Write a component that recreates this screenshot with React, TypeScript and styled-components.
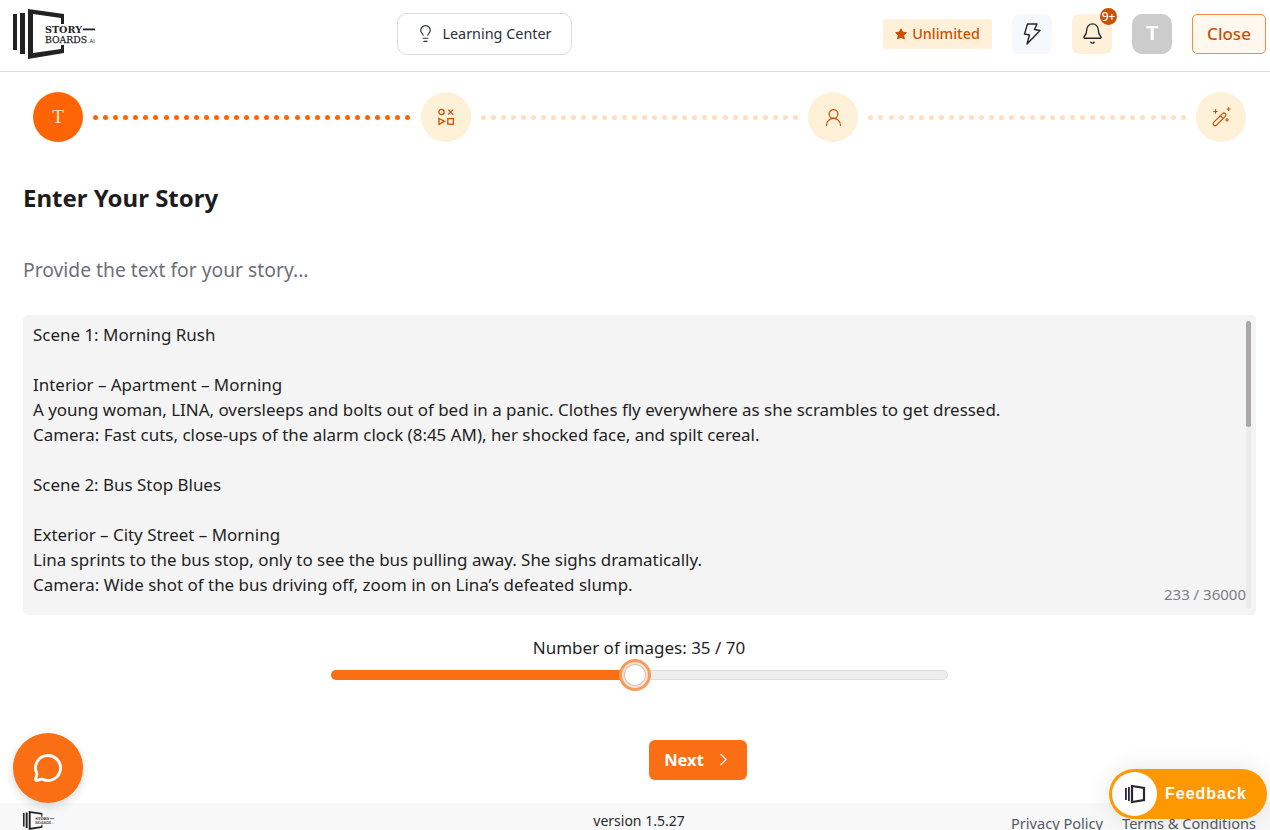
import React from "react";
import styled, { createGlobalStyle } from "styled-components";
import { Bell, ChevronRight, Lightbulb, MessageCircle, UserRound } from "lucide-react";

const FONT = `"Noto Sans", "Open Sans", sans-serif`;

const Global = createGlobalStyle`
  html, body { margin: 0; padding: 0; background: #fff; overflow: hidden; }
  body { font-family: ${FONT}; color: #1f1f1f; }
  * { box-sizing: border-box; }
`;

const Page = styled.div`
  position: relative;
  width: 1270px;
  height: 830px;
  overflow: hidden;
  display: flex;
  flex-direction: column;
`;

const Header = styled.header`
  flex: none;
  height: 72px;
  border-bottom: 1px solid #dcdcdc;
  display: flex;
  align-items: center;
  padding: 0 4px 0 13px;
`;

const LogoSlot = styled.div`
  flex: none;
  display: flex;
  margin-top: -3px;
`;

const LearningButton = styled.button`
  margin-left: 300px;
  margin-top: -3px;
  width: 175px;
  height: 42px;
  border: 1px solid #dcdcdc;
  border-radius: 10px;
  background: #fff;
  display: flex;
  align-items: center;
  justify-content: center;
  gap: 7px;
  font: 400 14.4px ${FONT};
  color: #29303b;
  padding: 0 1px 2px 0;
`;

const RightGroup = styled.div`
  margin-left: auto;
  display: flex;
  align-items: center;
  gap: 20px;
  margin-top: -4px;
`;

const PlanBadge = styled.div`
  width: 109px;
  height: 30px;
  background: #fff1d9;
  border-radius: 3px;
  display: flex;
  align-items: center;
  justify-content: center;
  gap: 5px;
  color: #cc4f00;
  font: 500 14.4px ${FONT};
`;

const IconTile = styled.div<{ $bg: string }>`
  position: relative;
  width: 40px;
  height: 40px;
  border-radius: 7px;
  background: ${(p) => p.$bg};
  display: flex;
  align-items: center;
  justify-content: center;
  color: #25252b;
`;

const CountBadge = styled.span`
  position: absolute;
  left: 28px;
  top: -6px;
  width: 17px;
  height: 17px;
  border-radius: 50%;
  background: #cc4f00;
  color: #fff;
  font: 500 12px/17px ${FONT};
  text-align: center;
`;

const Avatar = styled(IconTile)`
  border-radius: 10px;
  color: #fff;
  font: 700 20px "Liberation Sans", sans-serif;
`;

const CloseButton = styled.button`
  width: 74px;
  height: 40px;
  border: 1px solid #f58a45;
  border-radius: 5px;
  background: #fff8ef;
  color: #cc4f00;
  font: 500 17px ${FONT};
  padding: 0;
`;

const Stepper = styled.nav`
  flex: none;
  height: 50px;
  margin: 20px 24px 0 33px;
  display: flex;
  align-items: center;
`;

const StepCircle = styled.div<{ $active?: boolean }>`
  flex: none;
  width: 50px;
  height: 50px;
  border-radius: 50%;
  background: ${(p) => (p.$active ? "#ff6404" : "#fff0d8")};
  color: ${(p) => (p.$active ? "#ffe3cf" : "#cc4f00")};
  display: flex;
  align-items: center;
  justify-content: center;
  font: 400 19px "Liberation Serif", serif;
`;

const Connector = styled.div`
  flex: 1;
  margin: 0 10px;
  display: flex;
  justify-content: space-between;
`;

const Dot = styled.span<{ $active?: boolean }>`
  width: 5px;
  height: 5px;
  border-radius: 50%;
  background: ${(p) => (p.$active ? "#ff6404" : "#ffe0bd")};
`;

const Main = styled.main`
  flex: none;
  height: 661px;
  padding: 0 14px 0 23px;
  display: flex;
  flex-direction: column;
`;

const Title = styled.h1`
  margin: 38px 0 0;
  font: 700 24px/36px ${FONT};
  color: #1d1d1f;
`;

const Subtitle = styled.p`
  margin: 40px 0 0;
  font: 400 19.3px/28px ${FONT};
  color: #6d7078;
`;

const StoryBox = styled.div`
  position: relative;
  margin-top: 31px;
  height: 300px;
  border-radius: 5px;
  background: #f4f4f4;
  padding: 7px 10px;
  overflow: hidden;
  font: 400 16.95px/25px ${FONT};
  color: #1f1f1f;
  white-space: pre-wrap;
`;

const ScrollTrack = styled.div`
  position: absolute;
  right: 5px;
  top: 6px;
  bottom: 6px;
  width: 5px;
  border-radius: 3px;
  background: #ececec;
`;

const ScrollThumb = styled.div`
  height: 106px;
  border-radius: 3px;
  background: #aaa7a7;
`;

const Counter = styled.span`
  position: absolute;
  right: 10px;
  bottom: 11px;
  font: 400 15px/20px ${FONT};
  color: #7b7f87;
`;

const SliderBlock = styled.div`
  align-self: center;
  margin: 21px 0 0 -1px;
  width: 617px;
  display: flex;
  flex-direction: column;
  align-items: center;
`;

const SliderLabel = styled.div`
  font: 400 17px/24px ${FONT};
  color: #1f1f1f;
`;

const Track = styled.div`
  position: relative;
  margin-top: 10px;
  width: 100%;
  height: 10px;
  border-radius: 5px;
  background: #eeeeee;
  box-shadow: inset 0 0 0 1px #dedede;
`;

const TrackFill = styled.div`
  height: 100%;
  border-radius: 5px 0 0 5px;
  background: #fa6e14;
`;

const Thumb = styled.div`
  position: absolute;
  top: 50%;
  width: 32px;
  height: 32px;
  margin: -16px 0 0 -16px;
  border-radius: 50%;
  background: #fff;
  border: 3px solid #f79b5c;
  box-shadow: inset 0 0 0 2px #fbe3cf, inset 0 0 0 3px #cfc8c0;
`;

const NextButton = styled.button`
  align-self: flex-start;
  margin: 60px 0 0 626px;
  width: 98px;
  height: 40px;
  border: none;
  border-radius: 6px;
  background: #fa6e14;
  color: #fff;
  font: 700 16.5px ${FONT};
  display: flex;
  align-items: center;
  justify-content: center;
  gap: 9px;
  padding: 0 0 1px 2px;
`;

const Footer = styled.footer`
  flex: none;
  height: 40px;
  background: #f8f8f8;
  padding: 8px 14px 0 23px;
  display: grid;
  grid-template-columns: 1fr auto 1fr;
  align-items: start;
  font: 400 14px/20px ${FONT};
  color: #3d4148;
`;

const FooterVersion = styled.span`
  margin-right: 1px;
  color: #2a2a2a;
`;

const FooterLinks = styled.div`
  display: flex;
  justify-content: flex-end;
  gap: 19px;
  margin-top: 2px;
  font-size: 14.6px;
  color: #555a63;
`;

const ChatBubble = styled.button`
  position: absolute;
  left: 13px;
  top: 733px;
  width: 70px;
  height: 70px;
  border: none;
  border-radius: 50%;
  background: #fa6e14;
  box-shadow: 0 3px 10px rgba(0, 0, 0, 0.16);
  color: #fff;
  display: flex;
  align-items: center;
  justify-content: center;
  padding: 0;
`;

const FeedbackPill = styled.button`
  position: absolute;
  left: 1109px;
  top: 769px;
  width: 158px;
  height: 50px;
  border: none;
  border-radius: 25px;
  background: #ff9800;
  box-shadow: 0 0 24px rgba(0, 0, 0, 0.1);
  color: #fff;
  font: 700 16px "Liberation Sans", sans-serif;
  letter-spacing: 1px;
  display: flex;
  align-items: center;
  gap: 8px;
  padding: 0 0 0 3px;
`;

const FeedbackIcon = styled.span`
  width: 45px;
  height: 44px;
  border-radius: 50%;
  background: #fff;
  display: flex;
  align-items: center;
  justify-content: center;
`;

const Logo = ({ w = 84, h = 50 }: { w?: number; h?: number }) => (
  <svg width={w} height={h} viewBox="0 0 84 50" style={{ flex: "none" }}>
    <rect x="0" y="5" width="4" height="36" fill="#222" />
    <rect x="7" y="4" width="5" height="41" fill="#222" />
    <path d="M15 0 L51 5 V15 H48 V9 L20 5 V44 L48 40 V36 H51 V44 L15 50 Z" fill="#222" />
    <text x="32" y="24" fontFamily="'DejaVu Serif', serif" fontSize="10" fontWeight="700" fill="#222" textLength="37" lengthAdjust="spacingAndGlyphs">STORY</text>
    <rect x="70" y="19.5" width="12" height="1.8" fill="#222" />
    <text x="32" y="34" fontFamily="'DejaVu Serif', serif" fontSize="10" fill="#222" stroke="#222" strokeWidth="0.25" textLength="42" lengthAdjust="spacingAndGlyphs">BOARDS</text>
    <text x="75" y="34" fontFamily="'Liberation Sans', sans-serif" fontSize="5.5" fill="#222">.AI</text>
  </svg>
);

const SmallFeedbackMark = () => (
  <svg width="22" height="20" viewBox="0 0 22 20" fill="none">
    <rect x="1" y="4" width="1.8" height="12" fill="#2a2533" />
    <rect x="4" y="3" width="1.8" height="14" fill="#2a2533" />
    <path d="M8 2 L20 4 V16 L8 18 Z" stroke="#2a2533" strokeWidth="2.2" fill="none" />
  </svg>
);

const ShapesIcon = () => (
  <svg width="18" height="18" viewBox="0 0 18 18" fill="none" stroke="currentColor" strokeWidth="1.3">
    <circle cx="4.5" cy="4" r="2.6" />
    <path d="M11 1.6 L16.2 6.6 M16.2 1.6 L11 6.6" />
    <path d="M2 10.5 L7.5 13.3 L2 16.3 Z" />
    <rect x="10.8" y="10.6" width="5.6" height="5.6" />
  </svg>
);

const WandIcon = () => (
  <svg width="24" height="24" viewBox="0 0 22 22" fill="none" stroke="currentColor" strokeWidth="1.1">
    <rect x="-1.6" y="-7.5" width="3.6" height="15" rx="1.8" transform="translate(9.5 13) rotate(45)" />
    <path d="M10 9.5 L12.6 12" />
    <path d="M6 4 V8 M4 6 H8 M18 2 V5.4 M16.3 3.7 H19.7 M16.5 12 V15.4 M14.8 13.7 H18.2" strokeWidth="1" />
  </svg>
);

const BoltIcon = () => (
  <svg width="20" height="24" viewBox="0 0 20 24" fill="none" stroke="#25252b" strokeWidth="1.4" strokeLinejoin="round">
    <path d="M5.5 2 H15 L12.5 7.5 L18 8.5 L5 22 L7.5 13 L2.5 12 Z" />
  </svg>
);

const StarIcon = () => (
  <svg width="12" height="12" viewBox="0 0 24 24" fill="currentColor">
    <path d="M12 1.5 L15.3 8.2 L22.8 9.3 L17.4 14.5 L18.7 22 L12 18.5 L5.3 22 L6.6 14.5 L1.2 9.3 L8.7 8.2 Z" strokeLinejoin="round" stroke="currentColor" strokeWidth="2" />
  </svg>
);

const dots = Array.from({ length: 32 });

const Dots = ({ active }: { active?: boolean }) => (
  <Connector>
    {dots.map((_, i) => (
      <Dot key={i} $active={active} />
    ))}
  </Connector>
);

const story = `Scene 1: Morning Rush

Interior – Apartment – Morning
A young woman, LINA, oversleeps and bolts out of bed in a panic. Clothes fly everywhere as she scrambles to get dressed.
Camera: Fast cuts, close-ups of the alarm clock (8:45 AM), her shocked face, and spilt cereal.

Scene 2: Bus Stop Blues

Exterior – City Street – Morning
Lina sprints to the bus stop, only to see the bus pulling away. She sighs dramatically.
Camera: Wide shot of the bus driving off, zoom in on Lina’s defeated slump.`;

export default function App() {
  return (
    <Page>
      <Global />
      <Header>
        <LogoSlot>
          <Logo />
        </LogoSlot>
        <LearningButton>
          <Lightbulb size={19} strokeWidth={1.5} />
          Learning Center
        </LearningButton>
        <RightGroup>
          <PlanBadge>
            <StarIcon />
            Unlimited
          </PlanBadge>
          <IconTile $bg="#f6f9fc">
            <BoltIcon />
          </IconTile>
          <IconTile $bg="#fff1d9">
            <Bell size={23} strokeWidth={1.4} />
            <CountBadge>9+</CountBadge>
          </IconTile>
          <Avatar $bg="#cccccc">T</Avatar>
          <CloseButton>Close</CloseButton>
        </RightGroup>
      </Header>

      <Stepper>
        <StepCircle $active>T</StepCircle>
        <Dots active />
        <StepCircle>
          <ShapesIcon />
        </StepCircle>
        <Dots />
        <StepCircle>
          <UserRound size={21} strokeWidth={1.4} />
        </StepCircle>
        <Dots />
        <StepCircle>
          <WandIcon />
        </StepCircle>
      </Stepper>

      <Main>
        <Title>Enter Your Story</Title>
        <Subtitle>Provide the text for your story...</Subtitle>
        <StoryBox>
          {story}
          <ScrollTrack>
            <ScrollThumb />
          </ScrollTrack>
          <Counter>233 / 36000</Counter>
        </StoryBox>
        <SliderBlock>
          <SliderLabel>Number of images: 35 / 70</SliderLabel>
          <Track>
            <TrackFill style={{ width: `${(35 / 70) * 100}%` }} />
            <Thumb style={{ left: "49.4%" }} />
          </Track>
        </SliderBlock>
        <NextButton>
          Next
          <ChevronRight size={21} strokeWidth={1.3} />
        </NextButton>
      </Main>

      <Footer>
        <div>
          <Logo w={32} h={19} />
        </div>
        <FooterVersion>version 1.5.27</FooterVersion>
        <FooterLinks>
          <span>Privacy Policy</span>
          <span>Terms &amp; Conditions</span>
        </FooterLinks>
      </Footer>

      <ChatBubble>
        <MessageCircle size={30} strokeWidth={2.3} />
      </ChatBubble>
      <FeedbackPill>
        <FeedbackIcon>
          <SmallFeedbackMark />
        </FeedbackIcon>
        Feedback
      </FeedbackPill>
    </Page>
  );
}
